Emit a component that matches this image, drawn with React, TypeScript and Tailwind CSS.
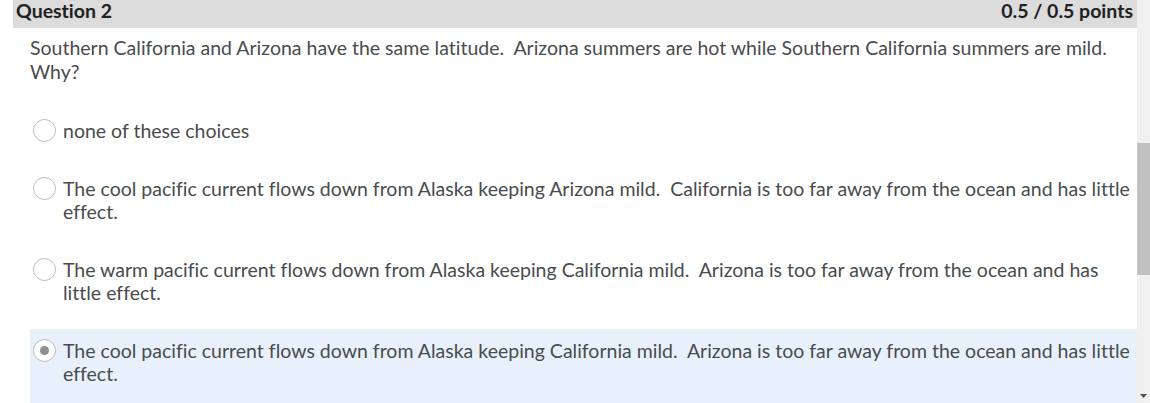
import React from "react";

const options = [
  { text: "none of these choices", selected: false },
  {
    text: "The cool pacific current flows down from Alaska keeping Arizona mild.\u00a0 California is too far away from the ocean and has little effect.",
    selected: false,
  },
  {
    text: "The warm pacific current flows down from Alaska keeping California mild.\u00a0 Arizona is too far away from the ocean and has little effect.",
    selected: false,
  },
  {
    text: "The cool pacific current flows down from Alaska keeping California mild.\u00a0 Arizona is too far away from the ocean and has little effect.",
    selected: true,
  },
];

function Radio({ checked }: { checked: boolean }) {
  return (
    <div className="w-[23px] h-[23px] shrink-0 rounded-full border border-[#b8bcbf] bg-white flex items-center justify-center">
      {checked && <div className="w-[9px] h-[9px] rounded-full bg-[#8c9093]" />}
    </div>
  );
}

export default function App() {
  return (
    <div
      className="w-[1150px] h-[403px] bg-white flex overflow-hidden [font-variant-ligatures:none]"
      style={{ fontFamily: "Lato, 'Noto Sans', sans-serif" }}
    >
      <div className="flex-1 pl-[13px] flex flex-col">
        <div className="h-[28px] shrink-0 bg-[#dcdcdc] flex justify-between items-start pl-[3px] pr-[4px] font-bold text-[19.5px] leading-[22px] text-[#202122]">
          <span>Question 2</span>
          <span>0.5 / 0.5 points</span>
        </div>
        <div className="pl-[17px] pr-[20px] pt-[8px] text-[19.5px] leading-[24px] text-[#494c4e]">
          Southern California and Arizona have the same latitude.&nbsp; Arizona summers are hot while Southern California summers are mild. Why?
        </div>
        <div className="pl-[17px] pt-[25px] flex flex-col gap-[15px]">
          {options.map((o, i) => (
            <div
              key={i}
              className={`flex items-start gap-[7px] pl-[3px] pr-[6px] pt-[10px] ${o.selected ? "bg-[#e8f1fb] pb-[30px]" : "pb-[10px]"}`}
            >
              <Radio checked={o.selected} />
              <div className="text-[19.5px] leading-[23px] text-[#494c4e]">{o.text}</div>
            </div>
          ))}
        </div>
      </div>
      <div className="w-[13px] bg-[#f0f0f0] flex flex-col">
        <div className="h-[143px]" />
        <div className="h-[132px] bg-[#c1c1c1]" />
        <div className="flex-1" />
        <div className="h-[14px] flex items-center justify-center">
          <svg width="7" height="4" viewBox="0 0 7 4">
            <path d="M0 0 L7 0 L3.5 4 Z" fill="#505050" />
          </svg>
        </div>
      </div>
    </div>
  );
}
